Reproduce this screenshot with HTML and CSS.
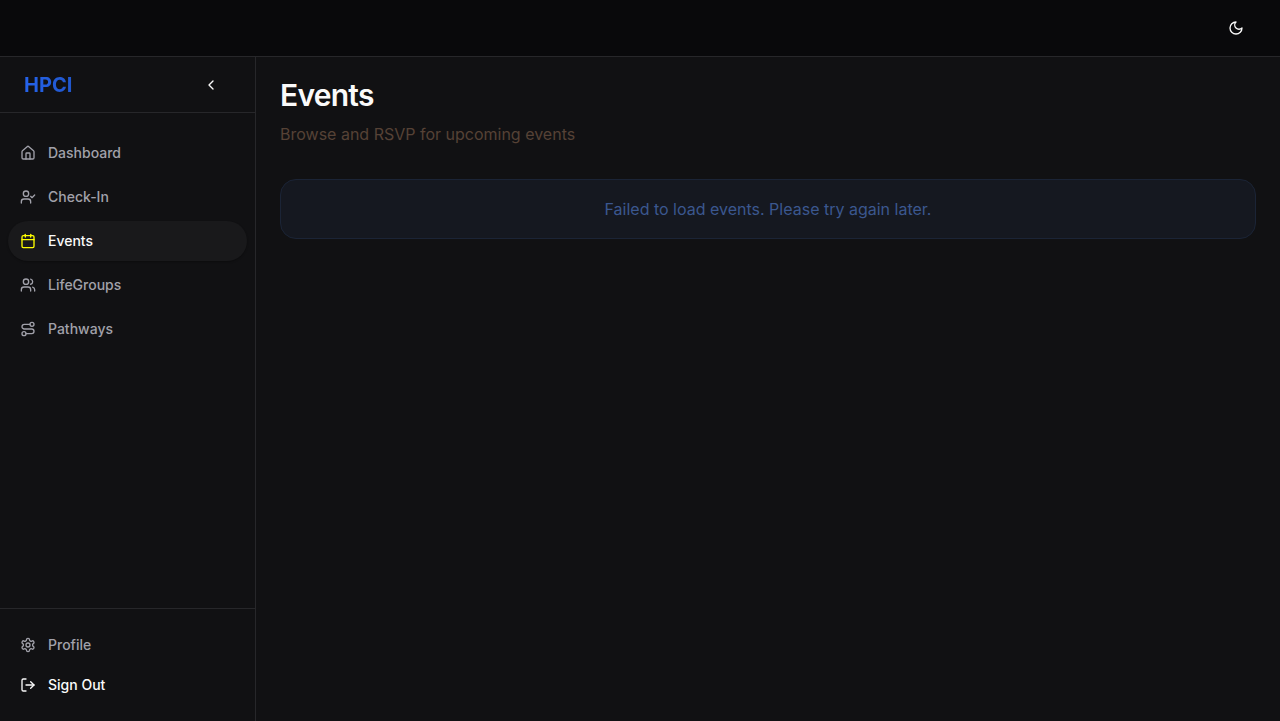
FILE: index.html
```html
<!DOCTYPE html>
<html lang="en">
<head>
<meta charset="utf-8">
<meta name="viewport" content="width=device-width, initial-scale=1">
<title>Events</title>
<link rel="stylesheet" href="styles.css">
</head>
<body>
<header class="topbar">
  <button class="icon-button" type="button" aria-label="Toggle theme">
    <svg class="icon" viewBox="0 0 24 24"><path d="M12 3a6 6 0 0 0 9 9 9 9 0 1 1-9-9Z"/></svg>
  </button>
</header>
<div class="shell">
  <aside class="sidebar">
    <div class="brand-row">
      <span class="brand">HPCI</span>
      <button class="icon-button" type="button" aria-label="Collapse sidebar">
        <svg class="icon" viewBox="0 0 24 24"><path d="m15 18-6-6 6-6"/></svg>
      </button>
    </div>
    <nav class="nav">
      <a class="nav-item" href="#dashboard">
        <svg class="icon" viewBox="0 0 24 24"><path d="M15 21v-8a1 1 0 0 0-1-1h-4a1 1 0 0 0-1 1v8"/><path d="M3 10a2 2 0 0 1 .709-1.528l7-5.999a2 2 0 0 1 2.582 0l7 5.999A2 2 0 0 1 21 10v9a2 2 0 0 1-2 2H5a2 2 0 0 1-2-2z"/></svg>
        Dashboard
      </a>
      <a class="nav-item" href="#check-in">
        <svg class="icon" viewBox="0 0 24 24"><path d="m16 11 2 2 4-4"/><path d="M16 21v-2a4 4 0 0 0-4-4H6a4 4 0 0 0-4 4v2"/><circle cx="9" cy="7" r="4"/></svg>
        Check-In
      </a>
      <a class="nav-item active" href="#events" aria-current="page">
        <svg class="icon" viewBox="0 0 24 24"><path d="M8 2v4"/><path d="M16 2v4"/><rect width="18" height="18" x="3" y="4" rx="2"/><path d="M3 10h18"/></svg>
        Events
      </a>
      <a class="nav-item" href="#lifegroups">
        <svg class="icon" viewBox="0 0 24 24"><path d="M16 21v-2a4 4 0 0 0-4-4H6a4 4 0 0 0-4 4v2"/><circle cx="9" cy="7" r="4"/><path d="M22 21v-2a4 4 0 0 0-3-3.87"/><path d="M16 3.13a4 4 0 0 1 0 7.75"/></svg>
        LifeGroups
      </a>
      <a class="nav-item" href="#pathways">
        <svg class="icon" viewBox="0 0 24 24"><circle cx="6" cy="19" r="3"/><path d="M9 19h8.5a3.5 3.5 0 0 0 0-7h-11a3.5 3.5 0 0 1 0-7H15"/><circle cx="18" cy="5" r="3"/></svg>
        Pathways
      </a>
    </nav>
    <div class="account">
      <a class="nav-item" href="#profile">
        <svg class="icon" viewBox="0 0 24 24"><path d="M12.22 2h-.44a2 2 0 0 0-2 2v.18a2 2 0 0 1-1 1.73l-.43.25a2 2 0 0 1-2 0l-.15-.08a2 2 0 0 0-2.73.73l-.22.38a2 2 0 0 0 .73 2.73l.15.1a2 2 0 0 1 1 1.72v.51a2 2 0 0 1-1 1.74l-.15.09a2 2 0 0 0-.73 2.73l.22.38a2 2 0 0 0 2.73.73l.15-.08a2 2 0 0 1 2 0l.43.25a2 2 0 0 1 1 1.73V20a2 2 0 0 0 2 2h.44a2 2 0 0 0 2-2v-.18a2 2 0 0 1 1-1.73l.43-.25a2 2 0 0 1 2 0l.15.08a2 2 0 0 0 2.73-.73l.22-.39a2 2 0 0 0-.73-2.73l-.15-.08a2 2 0 0 1-1-1.74v-.5a2 2 0 0 1 1-1.74l.15-.09a2 2 0 0 0 .73-2.73l-.22-.38a2 2 0 0 0-2.73-.73l-.15.08a2 2 0 0 1-2 0l-.43-.25a2 2 0 0 1-1-1.73V4a2 2 0 0 0-2-2z"/><circle cx="12" cy="12" r="3"/></svg>
        Profile
      </a>
      <button class="nav-item sign-out" type="button">
        <svg class="icon" viewBox="0 0 24 24"><path d="m16 17 5-5-5-5"/><path d="M21 12H9"/><path d="M9 21H5a2 2 0 0 1-2-2V5a2 2 0 0 1 2-2h4"/></svg>
        Sign Out
      </button>
    </div>
  </aside>
  <main class="content">
    <h1 class="title">Events</h1>
    <p class="subtitle">Browse and RSVP for upcoming events</p>
    <div class="alert" role="alert">Failed to load events. Please try again later.</div>
  </main>
</div>
</body>
</html>
```
FILE: styles.css
```css
* {
  box-sizing: border-box;
}

body {
  margin: 0;
  min-height: 100vh;
  display: flex;
  flex-direction: column;
  background: #111113;
  color: #fafafa;
  font-family: Inter, "Liberation Sans", sans-serif;
  font-size: 16px;
  line-height: 26px;
}

.topbar {
  display: flex;
  align-items: center;
  justify-content: flex-end;
  padding: 8px 24px;
  background: #09090b;
  border-bottom: 1px solid #27272a;
}

.icon {
  width: 16px;
  height: 16px;
  flex: none;
  fill: none;
  stroke: currentColor;
  stroke-width: 2;
  stroke-linecap: round;
  stroke-linejoin: round;
}

.icon-button {
  display: flex;
  align-items: center;
  justify-content: center;
  width: 40px;
  height: 40px;
  padding: 0;
  border: 0;
  border-radius: 20px;
  background: transparent;
  color: #fafafa;
}

.shell {
  flex: 1;
  display: flex;
}

.sidebar {
  flex: none;
  width: 256px;
  display: flex;
  flex-direction: column;
  border-right: 1px solid #27272a;
}

.brand-row {
  display: flex;
  align-items: center;
  justify-content: space-between;
  height: 56px;
  padding: 0 24px;
  border-bottom: 1px solid #27272a;
}

.brand {
  font-size: 20px;
  font-weight: 700;
  background: linear-gradient(90deg, #2563eb, #2157cc);
  background-clip: text;
  color: transparent;
}

.nav {
  flex: 1;
  display: flex;
  flex-direction: column;
  gap: 4px;
  padding: 20px 8px;
}

.nav-item {
  display: flex;
  align-items: center;
  gap: 12px;
  width: 100%;
  height: 40px;
  padding: 0 12px;
  border: 0;
  border-radius: 20px;
  background: transparent;
  color: #a1a1aa;
  font-family: inherit;
  font-size: 14px;
  font-weight: 500;
  line-height: 20px;
  text-decoration: none;
}

.nav-item.active {
  background: #19191b;
  color: #fafafa;
  box-shadow: 0 1px 2px rgba(0, 0, 0, 0.3);
}

.active .icon {
  color: #ffff00;
}

.nav-item.sign-out {
  color: #fafafa;
}

.account {
  padding: 16px 8px;
  border-top: 1px solid #27272a;
}

.content {
  flex: 1;
  min-width: 0;
  padding: 24px;
}

.title {
  margin: 0 0 12px;
  font-size: 30px;
  font-weight: 600;
  line-height: 28px;
  letter-spacing: -0.025em;
}

.subtitle {
  margin: 0 0 32px;
  color: #564236;
}

.alert {
  padding: 16px;
  border: 1px solid #1b2436;
  border-radius: 16px;
  background: #151820;
  color: #3b578f;
  text-align: center;
}
```
